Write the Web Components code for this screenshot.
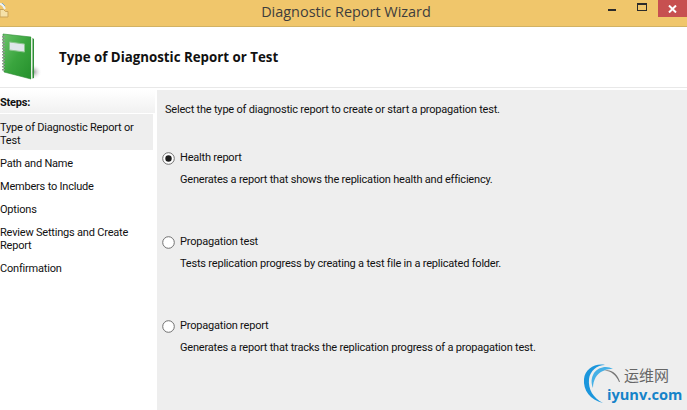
<!DOCTYPE html>
<html>
<head>
<meta charset="utf-8">
<title>Diagnostic Report Wizard</title>
<style>
  html, body { margin: 0; height: 100%; overflow: hidden; background: #fff; }
  body { font-family: Roboto, "Liberation Sans", sans-serif; font-size: 11px; letter-spacing: -.2px; color: #111; }
</style>
</head>
<body>
<wizard-window>
  <title-bar slot="top">Diagnostic Report Wizard</title-bar>
  <wizard-header slot="top">Type of Diagnostic Report or Test</wizard-header>
  <step-list slot="nav">
    <step-item active>Type of Diagnostic Report or Test</step-item>
    <step-item>Path and Name</step-item>
    <step-item>Members to Include</step-item>
    <step-item>Options</step-item>
    <step-item>Review Settings and Create Report</step-item>
    <step-item>Confirmation</step-item>
  </step-list>
  <report-panel slot="main">
    <report-option checked label="Health report">Generates a report that shows the replication health and efficiency.</report-option>
    <report-option label="Propagation test">Tests replication progress by creating a test file in a replicated folder.</report-option>
    <report-option label="Propagation report">Generates a report that tracks the replication progress of a propagation test.</report-option>
  </report-panel>
  <site-mark slot="main"></site-mark>
</wizard-window>

<script>
class WizardWindow extends HTMLElement {
  constructor() {
    super();
    this.attachShadow({ mode: "open" });
    this.shadowRoot.innerHTML = `
    <style>
      :host { display: flex; flex-direction: column; width: 687px; height: 410px; overflow: hidden; }
      .body { flex: 1; display: grid; grid-template-columns: 155px 1fr; column-gap: 2px; min-height: 0; margin-top: 2px; }
      .main { position: relative; background: #eeeeee; display: flex; min-height: 0; }
    </style>
    <slot name="top"></slot>
    <div class="body">
      <slot name="nav"></slot>
      <div class="main"><slot name="main"></slot></div>
    </div>`;
  }
}

class TitleBar extends HTMLElement {
  constructor() {
    super();
    this.attachShadow({ mode: "open" });
    this.shadowRoot.innerHTML = `
    <style>
      :host {
        display: block; position: relative; height: 26px;
        background: #f0c66b; border-bottom: 1px solid #d2b263;
      }
      .title {
        display: block; text-align: center; height: 26px; line-height: 24px; padding-left: 5px;
        font-family: "Open Sans", sans-serif; font-size: 14.45px; letter-spacing: 0; color: #3d3d3d;
      }
      .app { position: absolute; left: 0; top: 0; }
      .buttons { position: absolute; top: 0; right: 0; display: flex; height: 17px; }
      .btn { display: flex; justify-content: center; height: 17px; }
      .min { width: 29px; align-items: flex-end; box-sizing: border-box; padding-bottom: 6px; }
      .max { width: 32px; box-sizing: border-box; padding-top: 3px; }
      .close { width: 29px; background: #c75050; align-items: center; }
    </style>
    <svg class="app" width="9" height="18" viewBox="0 0 9 18">
      <path d="M0 9.500L3.500 9.500L5.500 11.500L8 11.500L8 17L0 17Z" fill="#f5e1a8" stroke="#c9a35a"/>
      <path d="M0 3.500L3 5.500L5 9" fill="none" stroke="#eef3f6" stroke-width="2"/>
      <path d="M2 3L5 6" stroke="#7fa9c4" stroke-width="1"/>
    </svg>
    <span class="title"><slot></slot></span>
    <div class="buttons">
      <div class="btn min"><svg width="8" height="2"><rect width="8" height="2" fill="#2b2b2b"/></svg></div>
      <div class="btn max"><svg width="10" height="8" viewBox="0 0 10 8"><rect x=".5" y=".5" width="9" height="7" fill="none" stroke="#2b2b2b"/><rect width="10" height="2" fill="#2b2b2b"/></svg></div>
      <div class="btn close"><svg width="9" height="8" viewBox="0 0 9 8"><path d="M1 .5L8 7.500M8 .5L1 7.500" stroke="#fff" stroke-width="2"/></svg></div>
    </div>`;
  }
}

class WizardHeader extends HTMLElement {
  constructor() {
    super();
    this.attachShadow({ mode: "open" });
    this.shadowRoot.innerHTML = `
    <style>
      :host {
        display: flex; align-items: center; height: 60px; background: #fff;
        border-bottom: 1px solid #e8e8e8;
      }
      svg { flex: none; margin-left: 1px; }
      h1 {
        margin: 0 0 0 17px; font-family: "Open Sans", sans-serif; font-size: 13.3px; letter-spacing: 0;
        font-weight: 700; color: #111; line-height: 18px;
      }
    </style>
    <svg width="41" height="48" viewBox="0 0 41 48">
      <defs>
        <linearGradient id="cover" x1="0" y1="0" x2="1" y2="1">
          <stop offset="0" stop-color="#6cc46c"/>
          <stop offset=".5" stop-color="#3aa53e"/>
          <stop offset="1" stop-color="#25902c"/>
        </linearGradient>
        <radialGradient id="shade" cx=".5" cy=".5" r=".5">
          <stop offset="0" stop-color="#8a8a8a"/>
          <stop offset="1" stop-color="#fff" stop-opacity="0"/>
        </radialGradient>
      </defs>
      <ellipse cx="32" cy="39" rx="9" ry="8" fill="url(#shade)"/>
      <path d="M2 1L30 4L30 46L3 39Z" fill="url(#cover)" stroke="#2c8a32" stroke-width=".6"/>
      <path d="M30 4L31.500 5L31.500 45.500L30 46Z" fill="#e9f1e6"/>
      <path d="M31.500 5L33 6L33 45L31.500 45.500Z" fill="#2f8f36"/>
      <path d="M8.500 9L23.500 11L23.500 19L8.500 17Z" fill="#dfe6ea" stroke="#8cc68e" stroke-width="1"/>
      <path d="M2.500 3L2.500 38" stroke="#8e9a8e" stroke-width="3" stroke-dasharray="1.500 1.500"/>
    </svg>
    <h1><slot></slot></h1>`;
  }
}

class StepList extends HTMLElement {
  constructor() {
    super();
    this.attachShadow({ mode: "open" });
    this.shadowRoot.innerHTML = `
    <style>
      :host { display: block; background: #fff; }
      .head {
        height: 23px; line-height: 25px; font-weight: 700; margin-bottom: 1px;
        background: linear-gradient(#ffffff, #f1f1f1);
      }
      .items { display: flex; flex-direction: column; }
    </style>
    <div class="head">Steps:</div>
    <div class="items"><slot></slot></div>`;
  }
}

class StepItem extends HTMLElement {
  constructor() {
    super();
    this.attachShadow({ mode: "open" });
    this.shadowRoot.innerHTML = `
    <style>
      :host { display: block; padding: 5px 18px 5px 0; line-height: 13px; margin-right: 2px; }
      :host([active]) { background: #eeeeee; padding-top: 7px; padding-bottom: 3px; margin-bottom: 2px; }
    </style>
    <slot></slot>`;
  }
}

class ReportPanel extends HTMLElement {
  constructor() {
    super();
    this.attachShadow({ mode: "open" });
    this.shadowRoot.innerHTML = `
    <style>
      :host { display: block; flex: 1; padding: 12px 0 0 8px; }
      .intro { line-height: 16px; margin-bottom: 32px; }
      .options { display: flex; flex-direction: column; gap: 46px; margin-left: -3px; }
    </style>
    <div class="intro">Select the type of diagnostic report to create or start a propagation test.</div>
    <div class="options"><slot></slot></div>`;
  }
}

class ReportOption extends HTMLElement {
  constructor() {
    super();
    this.attachShadow({ mode: "open" });
    this.shadowRoot.innerHTML = `
    <style>
      :host { display: grid; grid-template-columns: 13px 1fr; column-gap: 5px; row-gap: 6px; align-items: center; line-height: 16px; }
      .radio { width: 13px; height: 13px; }
      .desc { grid-column: 2; }
    </style>
    <svg class="radio" viewBox="0 0 13 13">
      <circle cx="6.500" cy="6.500" r="5.800" fill="#fff" stroke="#707070"/>
      <circle class="dot" cx="6.500" cy="6.500" r="3.200" fill="#1c1c1c"/>
    </svg>
    <label></label>
    <div class="desc"><slot></slot></div>`;
    this.shadowRoot.querySelector("label").textContent = this.getAttribute("label");
    if (!this.hasAttribute("checked")) this.shadowRoot.querySelector(".dot").remove();
  }
}

class SiteMark extends HTMLElement {
  constructor() {
    super();
    this.attachShadow({ mode: "open" });
    this.shadowRoot.innerHTML = `
    <style>
      :host { position: absolute; left: 426px; top: 273px; width: 104px; height: 42px; letter-spacing: 0; }
      svg { position: absolute; left: 0; top: 0; }
      .cn { position: absolute; left: 41px; top: 3px; font: 15px/18px "Noto Sans CJK SC", sans-serif; color: #666; white-space: nowrap; }
      .en { position: absolute; left: 24px; top: 23px; font: 700 14.6px/16px "Open Sans", sans-serif; color: #1583c9; white-space: nowrap; }
    </style>
    <svg width="40" height="41" viewBox="0 0 40 41">
      <path d="M20 40C7 37 0 27 1 16C2 6 12 0 22 2C14 2 7 8 6 16C5 26 10 35 20 40Z" fill="#1b96dc"/>
      <path d="M30 6C24 2 15 4 11 10C8 15 8 20 10 25C10 17 14 10 20 8C24 6 27 6 30 6Z" fill="#45b0e6"/>
      <path d="M37 19C35 11 28 5 20 8C27 7 33 12 36 19Z" fill="#777"/>
    </svg>
    <span class="cn">运维网</span>
    <span class="en">iyunv.com</span>`;
  }
}

customElements.define("wizard-window", WizardWindow);
customElements.define("title-bar", TitleBar);
customElements.define("wizard-header", WizardHeader);
customElements.define("step-list", StepList);
customElements.define("step-item", StepItem);
customElements.define("report-panel", ReportPanel);
customElements.define("report-option", ReportOption);
customElements.define("site-mark", SiteMark);
</script>
</body>
</html>
